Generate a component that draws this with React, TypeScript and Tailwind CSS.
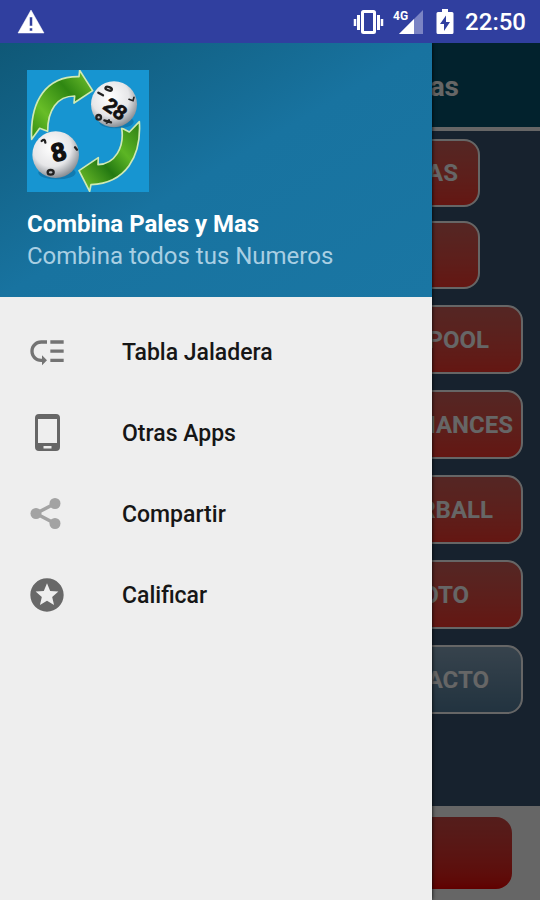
import { MdLowPriority, MdStars } from "react-icons/md"

function PhoneIcon({ className }: { className: string }) {
  return (
    <svg viewBox="0 0 40 40" className={className}>
      <path
        d="M12 1h17q4 0 4 4v29q0 4-4 4H12q-4 0-4-4V5q0-4 4-4zM11 6v24h19V6zM16.500 33v2.500h8V33z"
        fill="currentColor" fillRule="evenodd"
      />
    </svg>
  )
}

function ShareIcon({ className }: { className: string }) {
  return (
    <svg viewBox="0 0 40 40" className={className}>
      <path d="M28 9.500L9 19.500L28 29.500" fill="none" stroke="currentColor" strokeWidth="3.500" />
      <circle cx="28" cy="9.500" r="5.500" fill="currentColor" />
      <circle cx="9" cy="19.500" r="5.500" fill="currentColor" />
      <circle cx="28" cy="29.500" r="5.500" fill="currentColor" />
    </svg>
  )
}

const menu = [
  { label: "Tabla Jaladera", Icon: MdLowPriority, color: "text-[#737373]" },
  { label: "Otras Apps", Icon: PhoneIcon, color: "text-[#666666]" },
  { label: "Compartir", Icon: ShareIcon, color: "text-[#a3a3a3]" },
  { label: "Calificar", Icon: MdStars, color: "text-[#686868]" },
]

const red = "from-[#d2605a] to-[#fa382e]"
const blue = "from-[#8aa8c0] to-[#55809f]"

const games = [
  { label: "POOL", look: `${red} pr-8` },
  { label: "HANCES", look: `${red} pr-2` },
  { label: "RBALL", look: `${red} pr-7` },
  { label: "OTO", look: `${red} pr-13` },
  { label: "ACTO", look: `${blue} pr-8` },
]

function Logo() {
  return (
    <svg viewBox="22 30 366 366" className="w-[122px] h-[122px]" role="img" aria-label="Combina">
      <defs>
        <radialGradient id="ball" cx="0.42" cy="0.35" r="0.68">
          <stop offset="0" stopColor="#ffffff" />
          <stop offset="0.6" stopColor="#e6e6e8" />
          <stop offset="1" stopColor="#7f858c" />
        </radialGradient>
        <linearGradient id="arrowTop" x1="0" y1="1" x2="1" y2="0">
          <stop offset="0" stopColor="#2f8a12" />
          <stop offset="0.3" stopColor="#68bd27" />
          <stop offset="0.65" stopColor="#2f8712" />
          <stop offset="1" stopColor="#79c832" />
        </linearGradient>
        <linearGradient id="arrowBottom" x1="1" y1="0" x2="0" y2="1">
          <stop offset="0" stopColor="#2c7d14" />
          <stop offset="0.35" stopColor="#5cb524" />
          <stop offset="0.6" stopColor="#247912" />
          <stop offset="1" stopColor="#7cca2e" />
        </linearGradient>
      </defs>
      <rect x="22" y="30" width="366" height="366" fill="#1795d1" />
      <path
        d="M36 238 C30 120 82 48 178 50 L180 31 L219 92 L163 129 L165 108 C112 108 84 150 84 214 L60 205 Z"
        fill="url(#arrowTop)" stroke="#cfe9b5" strokeWidth="5" strokeLinejoin="round"
      />
      <path
        d="M306 204 L329 216 L359 185 C366 290 318 370 214 374 L210 394 L178 332 L236 293 L235 314 C286 312 315 262 306 204 Z"
        fill="url(#arrowBottom)" stroke="#cfe9b5" strokeWidth="5" strokeLinejoin="round"
      />
      <ellipse cx="290" cy="185" rx="52" ry="20" fill="#0b5f8f" opacity="0.5" />
      <ellipse cx="112" cy="338" rx="56" ry="20" fill="#0b5f8f" opacity="0.5" />
      <circle cx="283" cy="133" r="69" fill="url(#ball)" />
      <circle cx="108" cy="284" r="70" fill="url(#ball)" />
      <g fill="none" stroke="#222222" strokeWidth="7" strokeLinecap="round">
        <ellipse cx="267" cy="86" rx="10" ry="5" transform="rotate(20 267 86)" />
        <path d="M236 98 L250 106" />
        <path d="M328 118 L340 122 L343 112" strokeWidth="5" />
        <ellipse cx="237" cy="172" rx="7" ry="7" />
        <path d="M254 181 L274 187 M261 188 L268 181" />
        <path d="M66 243 Q76 234 77 248" />
        <path d="M166 262 L172 269" />
        <ellipse cx="93" cy="337" rx="9" ry="7" />
      </g>
      <text
        x="287" y="168" textAnchor="middle" transform="rotate(35 287 147)" fontSize="62"
        className="font-bold font-['Liberation_Sans',sans-serif]" fill="#111111" stroke="#111111" strokeWidth="2"
      >
        28
      </text>
      <text
        x="117" y="302" textAnchor="middle" transform="rotate(-15 117 276)" fontSize="76"
        className="font-bold font-['Liberation_Sans',sans-serif]" fill="#111111" stroke="#111111" strokeWidth="4"
      >
        8
      </text>
    </svg>
  )
}

function StatusBar() {
  return (
    <header className="h-[43px] px-[14px] flex items-center justify-between bg-[#303f9f] text-white">
      <svg viewBox="0 0 32 32" className="w-8 h-8">
        <path
          d="M17 4L30 27H4zM15.500 11v9h3v-9zM15.500 22v3h3v-3z"
          fill="currentColor" fillRule="evenodd" stroke="currentColor" strokeWidth="0.500" strokeLinejoin="round"
        />
      </svg>
      <div className="flex items-center">
        <svg viewBox="0 0 32 24" className="w-8 h-6" fill="none" stroke="currentColor">
          <rect x="10.500" y="1.500" width="12" height="21" rx="1" strokeWidth="3" />
          <path d="M6.500 5v15M26.500 5v15" strokeWidth="3" />
          <path d="M3 9v7M30 9v7" strokeWidth="2.500" />
        </svg>
        <svg viewBox="0 0 32 28" className="w-8 h-7 ml-2">
          <path d="M31 2v24H7z" fill="#7b84c4" />
          <path d="M22 11v15H7z" fill="#ffffff" />
          <text x="1" y="12" fontSize="12" className="font-bold font-[Roboto,sans-serif]" fill="#ffffff" stroke="#303f9f" strokeWidth="3" paintOrder="stroke">4G</text>
        </svg>
        <svg viewBox="0 0 18 27" className="w-[18px] h-[27px] ml-3">
          <path d="M6 1h6v3h4q1.500 0 1.500 1.500v19q0 1.500-1.500 1.500H2q-1.500 0-1.500-1.500v-19Q.5 4 2 4h4z" fill="#ffffff" />
          <path d="M10 7.500 L4 16h4v7l6-9h-4z" fill="#303f9f" />
        </svg>
        <span className="ml-[11px] text-2xl font-medium">22:50</span>
      </div>
    </header>
  )
}

export default function App() {
  return (
    <div className="min-h-screen flex flex-col font-[Roboto,sans-serif]">
      <StatusBar />

      <div className="relative flex-1 flex flex-col overflow-hidden">
        {/* Page under the drawer */}
        <main className="flex-1 flex flex-col bg-[#3a5573] text-white text-2xl font-bold">
          <div className="h-[88px] pt-1 flex items-center border-b-4 border-white bg-[#055571]">
            <h1 className="w-[85%] text-right text-[28px]">as</h1>
          </div>

          <div className="flex-1 flex flex-col gap-4 pt-2 pr-[17px]">
            <div className="flex flex-col gap-[14px] pr-[43px]">
              <button className={`h-[68px] w-1/2 self-end pr-5 text-right rounded-2xl border-2 border-white bg-linear-to-b ${red}`}>
                AS
              </button>
              <button aria-label="Jugadas" className={`h-[68px] w-1/2 self-end rounded-2xl border-2 border-white bg-linear-to-b ${red}`} />
            </div>
            {games.map((g) => (
              <button
                key={g.label}
                className={`h-[69px] w-1/2 self-end text-right rounded-2xl border-2 border-white bg-linear-to-b ${g.look}`}
              >
                {g.label}
              </button>
            ))}
          </div>

          <footer className="flex justify-end py-[11px] pr-7 bg-white">
            <button aria-label="Combinar" className="h-[72px] w-1/2 rounded-2xl bg-linear-to-b from-[#d24a46] to-[#f00000]" />
          </footer>
        </main>

        <div className="absolute inset-0 bg-black/60" />

        {/* Drawer */}
        <aside className="absolute inset-y-0 left-0 w-4/5 bg-[#eeeeee] shadow-[0_0_4px_#000000]">
          <div className="h-[254px] px-[27px] pt-[27px] bg-linear-to-br from-[#0f5877] via-[#1873a0] via-50% to-[#1a76a3]">
            <Logo />
            <h2 className="mt-4 text-2xl leading-8 font-bold text-white">Combina Pales y Mas</h2>
            <p className="text-2xl leading-8 text-[#a9cfe3]">Combina todos tus Numeros</p>
          </div>

          <nav className="pt-[14px]">
            {menu.map(({ label, Icon, color }) => (
              <a key={label} href="#" className="h-[81px] px-[27px] flex items-center gap-[55px] text-[23px] leading-8 font-medium text-[#161616]">
                <Icon className={`w-10 h-10 ${color}`} />
                <span className="pt-[3px]">{label}</span>
              </a>
            ))}
          </nav>
        </aside>
      </div>
    </div>
  )
}
